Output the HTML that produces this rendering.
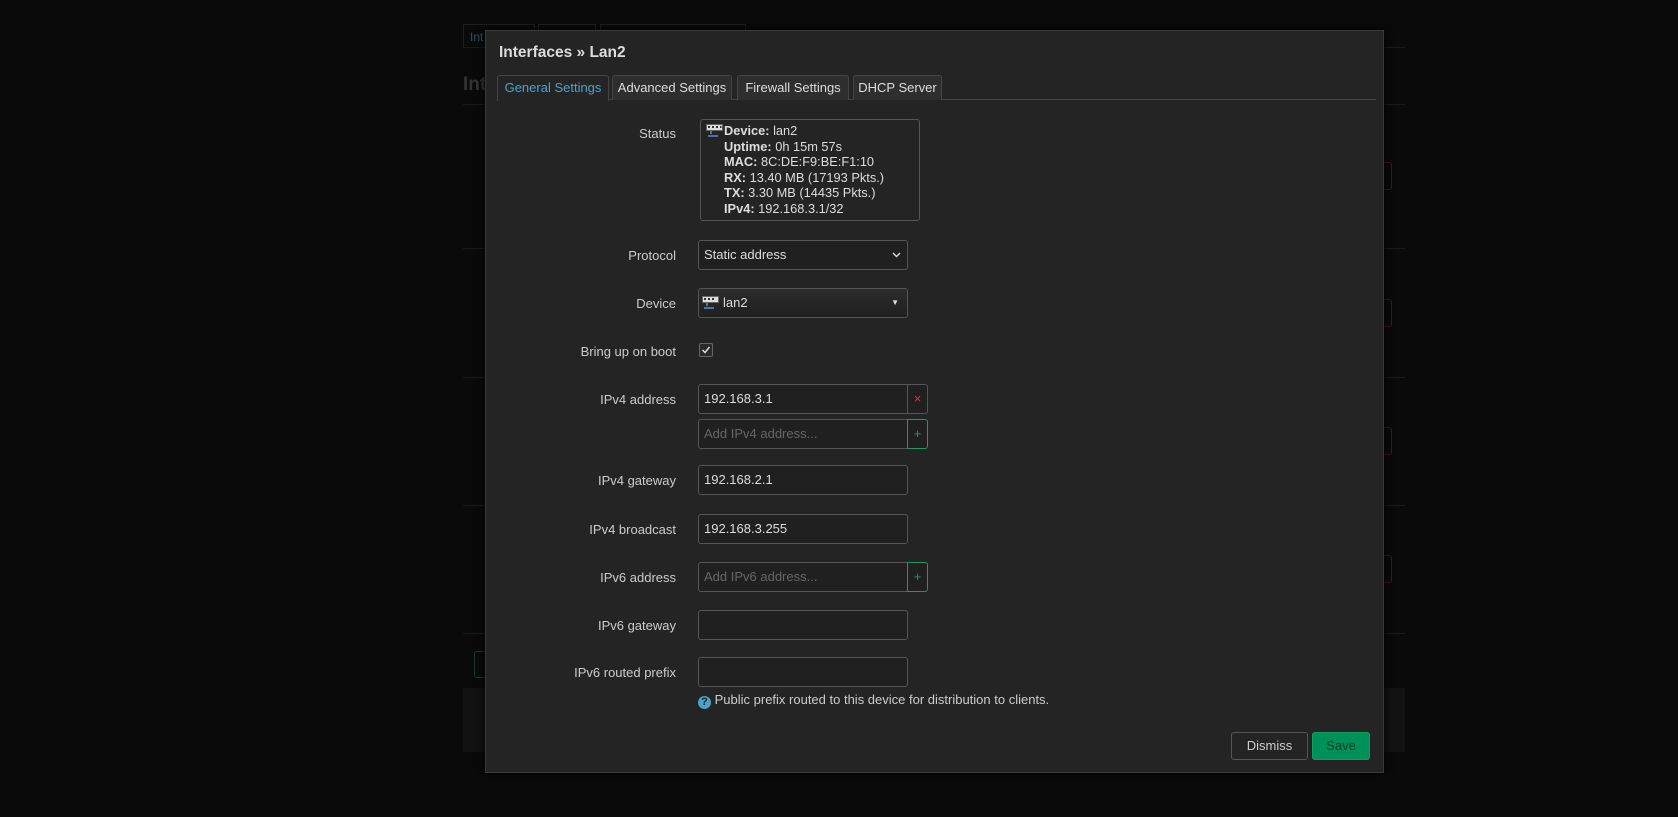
<!DOCTYPE html>
<html><head><meta charset="utf-8"><style>
*{box-sizing:border-box}
body{margin:0;width:1678px;height:817px;background:#0a0a0a;font-family:"Liberation Sans",sans-serif;font-size:13px;color:#ccc;position:relative;overflow:hidden}
.a{position:absolute}
.hl{position:absolute;left:463px;width:942px;height:1px;background:#1a1a1a}
.modal{position:absolute;left:485px;top:30px;width:899px;height:743px;background:#242424;border:1px solid #3a3a3a;box-shadow:0 0 8px #000}
.tab{position:absolute;top:44px;height:25px;border:1px solid #444;border-bottom:none;background:#2e2e2e;border-radius:3px 3px 0 0;color:#ddd;text-align:center;line-height:24px;font-size:13px}
.lbl{position:absolute;right:707px;text-align:right;color:#ccc;font-size:13px}
.inp{position:absolute;left:212px;width:210px;height:30px;border:1px solid #555;border-radius:3px;background:#202020;color:#ddd;padding-left:5px;line-height:28px;font-size:13px}
.ph{color:#666}
.btn{position:absolute;left:421px;width:21px;height:30px;border:1px solid #555;border-radius:0 3px 3px 0;background:#202020;text-align:center;line-height:27px;font-size:13px}
</style></head><body>
<div class="a" style="left:463px;top:24px;width:72px;height:23px;border:1px solid #1f1f1f;border-bottom:none;color:#2a5566;padding:5px 6px;font-size:12px">Int</div>
<div class="a" style="left:538px;top:24px;width:58px;height:23px;border:1px solid #1f1f1f;border-bottom:none"></div>
<div class="a" style="left:600px;top:24px;width:146px;height:23px;border:1px solid #1f1f1f;border-bottom:none"></div>
<div class="hl" style="top:47px"></div>
<div class="a" style="left:463px;top:74px;font-size:19px;font-weight:bold;color:#333">Int</div>
<div class="hl" style="top:104px"></div><div class="hl" style="top:248px"></div><div class="hl" style="top:377px"></div><div class="hl" style="top:505px"></div><div class="hl" style="top:633px"></div>
<div class="a" style="left:1380px;top:162px;width:12px;height:28px;border:1px solid #3a1a1a;border-radius:3px"></div>
<div class="a" style="left:1380px;top:299px;width:12px;height:28px;border:1px solid #3a1a1a;border-radius:3px"></div>
<div class="a" style="left:1380px;top:427px;width:12px;height:28px;border:1px solid #3a1a1a;border-radius:3px"></div>
<div class="a" style="left:1380px;top:555px;width:12px;height:28px;border:1px solid #3a1a1a;border-radius:3px"></div>
<div class="a" style="left:474px;top:651px;width:20px;height:27px;border:1px solid #1a3a2a;border-radius:3px"></div>
<div class="a" style="left:463px;top:688px;width:942px;height:64px;background:#121212"></div>

<div class="modal">
<div class="a" style="left:13px;top:13px;font-size:15.5px;font-weight:bold;color:#ddd">Interfaces » Lan2</div>
<div class="a" style="left:11px;top:68px;width:879px;height:1px;background:#444"></div>
<div class="tab" style="left:11px;width:112px;background:#242424;color:#4aa3c8;height:26px">General Settings</div>
<div class="tab" style="left:126px;width:120px">Advanced Settings</div>
<div class="tab" style="left:251px;width:112px">Firewall Settings</div>
<div class="tab" style="left:367px;width:89px">DHCP Server</div>

<div class="lbl" style="top:95px">Status</div>
<div class="a" style="left:214px;top:88px;width:220px;height:102px;border:1px solid #555;border-radius:3px;padding:3px 0 0 23px;font-size:12.8px;line-height:15.6px;color:#ddd">
<svg class="a" style="left:5px;top:4px" width="17" height="14" viewBox="0 0 17 14"><rect x="0.5" y="0.5" width="16" height="6" fill="#ddd" stroke="#666"/><rect x="2" y="2" width="2" height="2" fill="#333"/><rect x="6" y="2" width="2" height="2" fill="#333"/><rect x="10" y="2" width="2" height="2" fill="#333"/><rect x="14" y="2" width="1.5" height="2" fill="#333"/><path d="M5 7v3M2 12h10" stroke="#5a8fd0" stroke-width="1.5" fill="none"/></svg>
<b>Device:</b> lan2<br><b>Uptime:</b> 0h 15m 57s<br><b>MAC:</b> 8C:DE:F9:BE:F1:10<br><b>RX:</b> 13.40 MB (17193 Pkts.)<br><b>TX:</b> 3.30 MB (14435 Pkts.)<br><b>IPv4:</b> 192.168.3.1/32</div>

<div class="lbl" style="top:217px">Protocol</div>
<div class="inp" style="top:209px">Static address<svg class="a" style="right:6px;top:11px" width="9" height="6"><path d="M1 1l3.5 3.5L8 1" stroke="#ddd" stroke-width="1.4" fill="none"/></svg></div>
<div class="lbl" style="top:265px">Device</div>
<div class="inp" style="top:257px;background:linear-gradient(#2c2c2c,#202020);padding-left:24px">lan2
<svg class="a" style="left:3px;top:7px" width="17" height="14" viewBox="0 0 17 14"><rect x="0.5" y="0.5" width="16" height="6" fill="#ddd" stroke="#666"/><rect x="2" y="2" width="2" height="2" fill="#333"/><rect x="6" y="2" width="2" height="2" fill="#333"/><rect x="10" y="2" width="2" height="2" fill="#333"/><path d="M5 7v3M2 12h10" stroke="#5a8fd0" stroke-width="1.5" fill="none"/></svg>
<span class="a" style="right:8px;top:0;font-size:8px">▼</span></div>
<div class="lbl" style="top:313px">Bring up on boot</div>
<div class="a" style="left:213px;top:312px;width:14px;height:14px;border:1px solid #666;border-radius:2px;background:#2a2a2a"><svg class="a" style="left:1px;top:1px" width="10" height="10"><path d="M1.5 5l2.5 2.5L8.5 2" stroke="#ddd" stroke-width="1.5" fill="none"/></svg></div>

<div class="lbl" style="top:361px">IPv4 address</div>
<div class="inp" style="top:353px;border-radius:3px 0 0 3px">192.168.3.1</div>
<div class="btn" style="top:353px;color:#d33">×</div>
<div class="inp ph" style="top:388px;border-radius:3px 0 0 3px">Add IPv4 address...</div>
<div class="btn" style="top:388px;border-color:#1c9a66;color:#1c9a66">+</div>
<div class="lbl" style="top:442px">IPv4 gateway</div>
<div class="inp" style="top:434px">192.168.2.1</div>
<div class="lbl" style="top:491px">IPv4 broadcast</div>
<div class="inp" style="top:483px">192.168.3.255</div>
<div class="lbl" style="top:539px">IPv6 address</div>
<div class="inp ph" style="top:531px;border-radius:3px 0 0 3px">Add IPv6 address...</div>
<div class="btn" style="top:531px;border-color:#1c9a66;color:#1c9a66">+</div>
<div class="lbl" style="top:587px">IPv6 gateway</div>
<div class="inp" style="top:579px"></div>
<div class="lbl" style="top:634px">IPv6 routed prefix</div>
<div class="inp" style="top:626px"></div>
<div class="a" style="left:212px;top:661px;font-size:13px;color:#ccc"><span style="display:inline-block;width:13px;height:13px;border-radius:50%;background:#4aa3c8;color:#222;font-size:11px;font-weight:bold;text-align:center;line-height:13px;vertical-align:-1px">?</span> Public prefix routed to this device for distribution to clients.</div>

<div class="a" style="left:745px;top:701px;width:77px;height:28px;border:1px solid #555;border-radius:3px;text-align:center;line-height:26px;color:#ccc;font-size:13px">Dismiss</div>
<div class="a" style="left:826px;top:701px;width:58px;height:28px;border:1px solid #0ca060;border-radius:3px;background:#00905a;text-align:center;line-height:26px;color:#0d3d25;font-size:13px">Save</div>
</div>
</body></html>
